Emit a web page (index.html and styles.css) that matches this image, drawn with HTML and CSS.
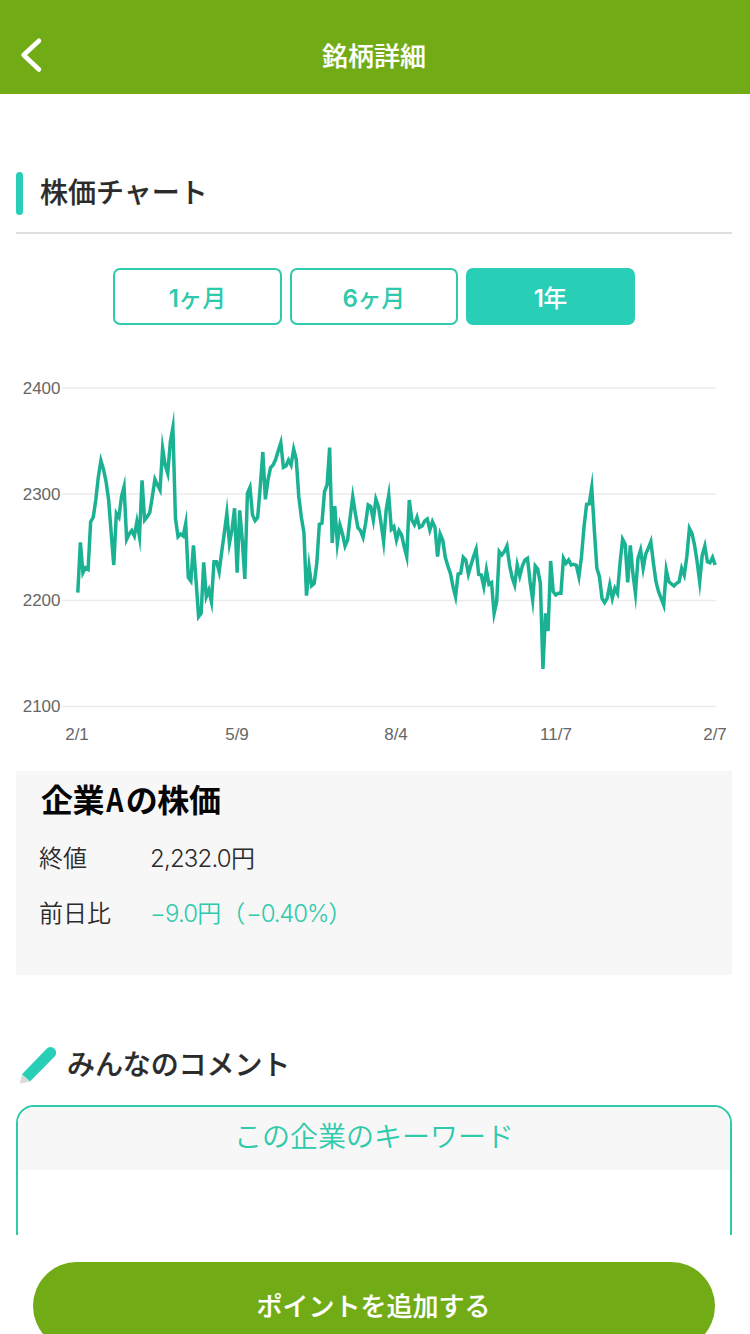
FILE: index.html
```html
<!DOCTYPE html>
<html lang="ja">
<head>
<meta charset="utf-8">
<title>銘柄詳細</title>
<link rel="stylesheet" href="styles.css">
</head>
<body>
<div class="screen">
  <header class="header">
    <svg class="back" viewBox="0 0 28 40"><path d="M22 5.7 L6.6 20 L22 34.5"/></svg>
    <h1 class="header-title">銘柄詳細</h1>
    <span class="header-side"></span>
  </header>
  <main class="content">
    <div class="section-head">
      <span class="section-bar"></span>
      <h2 class="section-title">株価チャート</h2>
    </div>
    <div class="tabs">
      <button class="tab"><span class="num">1</span>ヶ月</button>
      <button class="tab"><span class="num">6</span>ヶ月</button>
      <button class="tab active"><span class="num">1</span>年</button>
    </div>
    <svg class="chart" viewBox="16 370 716 380">
      <g class="grid">
        <path d="M62 388H716M62 494H716M62 600.5H716M62 706.5H716"/>
      </g>
      <g class="labels labels-y">
        <text x="60.5" y="393.5">2400</text>
        <text x="60.5" y="500">2300</text>
        <text x="60.5" y="606">2200</text>
        <text x="60.5" y="712">2100</text>
      </g>
      <g class="labels labels-x">
        <text x="77" y="740">2/1</text>
        <text x="237" y="740">5/9</text>
        <text x="396" y="740">8/4</text>
        <text x="556" y="740">11/7</text>
        <text x="715" y="740">2/7</text>
      </g>
      <polyline class="series" id="series"/>
    </svg>
    <section class="quote">
      <h3 class="quote-title">企業<span class="quote-a">A</span>の株価</h3>
      <dl class="quote-rows">
        <dt>終値</dt>
        <dd><span class="light">2,232.0</span>円</dd>
        <dt>前日比</dt>
        <dd class="down"><span class="light">−9.0</span>円（<span class="light ratio">−0.40%</span>）</dd>
      </dl>
    </section>
    <div class="comment-head">
      <svg class="pencil" viewBox="0 0 40 40"><path class="pencil-tip" d="M0.6 37.6 L3 28 L11 35.8 Z"/><path class="pencil-body" d="M3 28.2 L27.6 2.8 A5.5 5.5 0 0 1 35.6 10.6 L11 35.6 Z"/></svg>
      <h2 class="comment-title">みんなのコメント</h2>
    </div>
    <section class="keywords"><h3 class="keywords-title">この企業のキーワード</h3></section>
  </main>
  <footer class="footer"><button class="cta">ポイントを追加する</button></footer>
</div>
<script src="chart.js"></script>
</body>
</html>
```
FILE: styles.css
```css
* { box-sizing: border-box; margin: 0; padding: 0; }
body {
  width: 750px; height: 1334px; overflow: hidden; background: #fff; color: #2b2b2b;
  font-family: "Noto Sans CJK JP", sans-serif;
}
button { font-family: inherit; }
.screen { display: flex; flex-direction: column; height: 1334px; overflow: hidden; }
.header {
  display: flex; align-items: center; flex: none; height: 94px;
  padding: 16px 18px 0 17px; background: #71ab15; color: #fff;
}
.back { width: 28px; height: 40px; fill: none; stroke: #fff; stroke-width: 4.6; stroke-linecap: round; stroke-linejoin: round; }
.header-side { width: 28px; }
.header-title {
  flex: 1; padding-right: 1px; text-align: center; font-size: 26px; line-height: 38px; font-weight: 500;
  -webkit-text-stroke: 0.2px currentColor;
}
.content { flex: none; height: 1141px; padding: 78px 18px 0 16px; overflow: hidden; }
.section-head {
  display: flex; gap: 17px; height: 62px; border-bottom: 2px solid #dedfdf;
}
.section-bar { width: 7px; height: 43px; border-radius: 4px; background: #28ceb5; }
.section-title { font-size: 28px; line-height: 38px; font-weight: 500; -webkit-text-stroke: 0.2px currentColor; }
.tabs { display: flex; justify-content: center; gap: 8px; margin-top: 34px; }
.tab {
  width: 168.5px; height: 57px; padding-top: 2px; border: 2px solid #2fc9ab; border-radius: 7px; background: #fff;
  color: #2fc9ab; font-size: 24px; line-height: 50px; font-weight: 500;
}
.tab.active { background: #28ceb5; border-color: #28ceb5; color: #fff; }
.num { font-family: Inter, sans-serif; font-weight: 600; letter-spacing: -0.6px; }
.chart { display: block; width: 716px; height: 380px; margin-top: 45px; }
.grid { fill: none; stroke: #ebebeb; stroke-width: 1.5; }
.series { fill: none; stroke: #1bb294; stroke-width: 3.5; stroke-miterlimit: 10; }
.labels { font: 17px "Liberation Sans", Arial, sans-serif; fill: #666; }
.labels-y { text-anchor: end; }
.labels-x { text-anchor: middle; }
.quote { height: 204px; margin-top: 21px; padding: 5px 23px; background: #f7f7f7; }
.quote-title { padding-left: 2px; font-size: 32px; line-height: 44px; font-weight: 700; letter-spacing: -0.4px; color: #060606; }
.quote-a { display: inline-block; width: 21.5px; text-align: center; font-weight: 700; transform: scaleX(0.84); }
.quote-rows { display: grid; grid-template-columns: 111px 1fr; grid-auto-rows: 54.5px; margin-top: 10px; font-size: 24px; line-height: 54px; font-weight: 350; }
.light { font-family: Inter, sans-serif; font-weight: 300; letter-spacing: -0.8px; }
.ratio { margin-left: 1px; letter-spacing: -1.2px; }
.down { color: #2fc9ab; }
.comment-head { display: flex; gap: 8px; margin-top: 71px; padding-left: 3px; height: 59px; }
.pencil { width: 40px; height: 40px; }
.pencil-tip { fill: #dadada; }
.pencil-body { fill: #28ceb5; }
.comment-title { font-size: 28px; line-height: 34px; font-weight: 500; letter-spacing: -0.1px; -webkit-text-stroke: 0.2px currentColor; }
.keywords { height: 180px; border: 2px solid #2fc9ab; border-radius: 18px; overflow: hidden; }
.keywords-title { height: 63px; background: #f7f7f7; color: #2fc9ab; text-align: center; font-size: 28px; line-height: 56px; font-weight: 350; }
.footer { flex: none; padding: 27px 35px 0 33px; background: #fff; }
.cta {
  width: 682px; height: 88px; border: 0; border-radius: 44px; background: #71ab15; color: #fff;
  padding: 0 1px 2px 0; font-size: 26px; line-height: 86px; font-weight: 500; -webkit-text-stroke: 0.2px currentColor;
}
```
FILE: chart.js
```js
// Daily levels in thirds of a pixel below each block's base line.
const blocks = [
  [0, [638,487,578,563,568,425,412,360,290,242,268,305,360,460,555,400,412,350,320,478,462,452,468,425,470,301,420,410,398,350,298,315,330,205,255,280,187,143,415,470,462,468,430,592,603,496,600,710,700,547,650,630,665,545,545,575,515,460,400,490,450,385,578,391,480,597,340,322,405,422,412,320,216,358,300,263,255,238,212,188,262,258,240,255,208,238,350,412,458,647,560,617,610,550,433,430,335,315,203,489,378,490,435,462,498,480,410,350,400,443,452,472,430,375,380,420,358,380,430,485]],
  [180, [210,165,268,260,300,272,285,320,350,180,240,254,232,262,258,243,237,270,245,262,350,282,300,352,378,400,440,470,402,400,352,360,402,375,350,328,403,405,440,390,433,428,520,485,335,345,335,318,375,412,435,375,408,378,360,355,425,480,378,388,430,687,520,573,363,455,465,460,460,355,370,360,375,373,376,410,350,260,193,192,142,270,385,410,475,488,475,435,475,445,460,370,298,313,427,316,400,460,355,330,385,342,325,305,370,425,455,475,495,390,425,432,438,430,425,385,405,350,265,280,315,365,425,345,318,365,368,352,375]]
];
const levels = blocks.flatMap(([base, values]) => values.map(v => 380 + (v + base) / 3));
const step = 637.3 / (levels.length - 1);
document.getElementById("series").setAttribute(
  "points",
  levels.map((y, i) => `${(77.8 + i * step).toFixed(2)},${y.toFixed(2)}`).join(" ")
);
```
